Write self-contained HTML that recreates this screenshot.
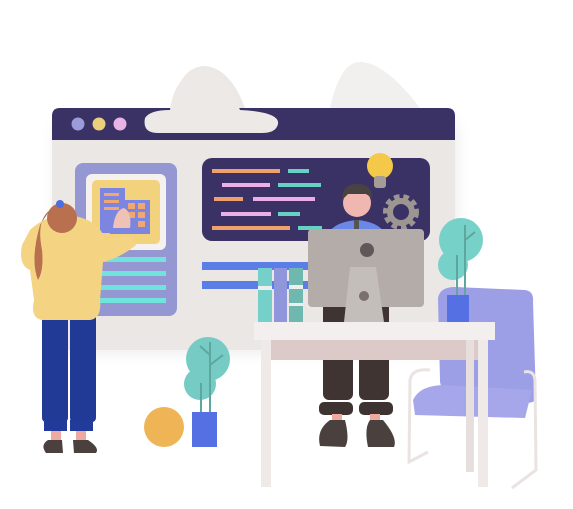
<!DOCTYPE html>
<html><head><meta charset="utf-8"><style>html,body{margin:0;padding:0;background:#fff;width:573px;height:509px;overflow:hidden}</style></head>
<body>
<svg width="573" height="509" viewBox="0 0 573 509" xmlns="http://www.w3.org/2000/svg">
<defs>
<filter id="sh" x="-20%" y="-20%" width="140%" height="150%"><feGaussianBlur stdDeviation="8"/></filter>
</defs>
<path d="M330 108 Q340 62 360 62 Q385 62 420 108 Z" fill="#f2f0ef"/>
<path d="M170 110 Q180 66 205 66 Q230 68 245 108 Z" fill="#ebe8e6"/>
<rect x="56" y="120" width="400" height="232" rx="10" fill="#000" opacity=".08" filter="url(#sh)"/>
<rect x="52" y="108" width="403" height="242" rx="8" fill="#ebe7e5"/>
<path d="M52 116 Q52 108 60 108 L447 108 Q455 108 455 116 L455 140 L52 140 Z" fill="#3a3264"/>
<circle cx="78" cy="124" r="6.5" fill="#9a9bd8"/>
<circle cx="99" cy="124" r="6.5" fill="#eccf7d"/>
<circle cx="120" cy="124" r="6.5" fill="#e9b3e6"/>
<path d="M158 133 Q142 133 145 118 Q150 110 170 110 Q175 72 205 70 Q225 70 240 110 Q280 112 278 124 Q276 133 262 133 Z" fill="#ece9e7"/>
<rect x="75" y="163" width="102" height="153" rx="8" fill="#9597d3"/>
<rect x="86" y="174" width="80" height="76" rx="6" fill="#f4f1ee"/>
<rect x="92" y="180" width="68" height="64" rx="5" fill="#f2d27c"/>
<rect x="100" y="188" width="25" height="45" fill="#7c86e0"/>
<rect x="110" y="200" width="40" height="34" fill="#7c86e0"/>
<g fill="#f0a870"><rect x="128" y="203" width="7" height="6"/><rect x="138" y="203" width="7" height="6"/><rect x="128" y="212" width="7" height="6"/><rect x="138" y="212" width="7" height="6"/><rect x="138" y="221" width="7" height="6"/><rect x="104" y="193" width="15" height="3"/><rect x="104" y="200" width="15" height="3"/><rect x="104" y="207" width="15" height="3"/></g>
<g fill="#6fe3dc"><rect x="90" y="257" width="76" height="5"/><rect x="90" y="271" width="76" height="5"/><rect x="90" y="285" width="76" height="5"/><rect x="90" y="298" width="76" height="5"/></g>
<rect x="202" y="158" width="228" height="83" rx="10" fill="#3a3264"/>
<g>
<rect x="212" y="169" width="68" height="4" fill="#f0a06c"/><rect x="288" y="169" width="21" height="4" fill="#67d1c4"/>
<rect x="222" y="183" width="48" height="4" fill="#ebaee8"/><rect x="278" y="183" width="43" height="4" fill="#67d1c4"/>
<rect x="214" y="197" width="29" height="4" fill="#f0a06c"/><rect x="253" y="197" width="62" height="4" fill="#ebaee8"/>
<rect x="221" y="212" width="50" height="4" fill="#ebaee8"/><rect x="278" y="212" width="22" height="4" fill="#67d1c4"/>
<rect x="212" y="226" width="78" height="4" fill="#f0a06c"/><rect x="298" y="226" width="24" height="4" fill="#67d1c4"/>
</g>
<rect x="202" y="262" width="130" height="8" fill="#5b7de6"/>
<rect x="202" y="281" width="130" height="8" fill="#5b7de6"/>
<circle cx="380" cy="166" r="13" fill="#f4c94a"/>
<rect x="374" y="176" width="12" height="12" rx="3" fill="#a59c98"/>
<circle cx="401" cy="212" r="14" fill="none" stroke="#9d9592" stroke-width="8" stroke-dasharray="5 3.5"/>
<circle cx="401" cy="212" r="11" fill="none" stroke="#9d9592" stroke-width="6"/>
<path d="M325 240 Q330 222 357 220 Q383 222 388 240 Z" fill="#6c88e6"/>
<circle cx="357" cy="203" r="14" fill="#f0b6b0"/>
<path d="M342 200 Q342 184 357 184 Q372 184 372 198 L366 194 L348 194 Z" fill="#4a4240"/>
<rect x="354" y="220" width="5" height="12" fill="#555"/>
<rect x="323" y="300" width="30" height="100" rx="6" fill="#3f3432"/>
<rect x="359" y="300" width="30" height="100" rx="6" fill="#3f3432"/>
<rect x="319" y="402" width="34" height="13" rx="5" fill="#3d3331"/>
<rect x="359" y="402" width="34" height="13" rx="5" fill="#3d3331"/>
<rect x="332" y="414" width="10" height="8" fill="#eeaaa0"/><rect x="370" y="414" width="10" height="8" fill="#eeaaa0"/>
<path d="M320 446 Q316 430 330 420 L345 420 Q350 440 345 447 Z" fill="#4a403e"/>
<path d="M368 447 Q364 428 370 420 L383 420 Q398 438 394 447 Z" fill="#4a403e"/>
<rect x="308" y="229" width="116" height="78" rx="4" fill="#b4aca8"/>
<circle cx="367" cy="250" r="7" fill="#5e5858"/>
<path d="M350 267 L376 267 L384 322 L344 322 Z" fill="#c4beba"/>
<circle cx="364" cy="296" r="5" fill="#7a706c"/>
<rect x="258" y="268" width="14" height="56" fill="#74d0c9"/>
<rect x="274" y="268" width="13" height="56" fill="#8f96dc"/>
<rect x="289" y="268" width="14" height="56" fill="#6fb8b0"/>
<rect x="258" y="286" width="14" height="4" fill="#eee"/><rect x="289" y="285" width="14" height="4" fill="#eee"/><rect x="289" y="303" width="14" height="3" fill="#eee"/>
<path d="M438 298 Q440 287 455 287 L525 290 Q534 291 533 302 L536 400 Q530 405 515 402 L450 395 Q440 390 440 380 Z" fill="#9c9ee6"/>
<path d="M413 400 Q420 385 445 385 L532 390 L525 418 L415 415 Z" fill="#a5a7ea"/>
<path d="M430 370 Q412 368 410 380 L409 462 L428 452" fill="none" stroke="#eae3e2" stroke-width="3"/>
<path d="M524 372 Q534 370 535 380 L536 470 L512 488" fill="none" stroke="#eae3e2" stroke-width="3"/>
<circle cx="461" cy="240" r="22" fill="#76d1c9"/>
<circle cx="453" cy="265" r="15" fill="#76d1c9"/>
<path d="M465 225 L465 295 M457 255 L457 295 M465 240 L475 232" stroke="#5fa69f" stroke-width="2" fill="none"/>
<rect x="447" y="295" width="22" height="28" fill="#5470e2"/>
<rect x="254" y="322" width="241" height="18" fill="#f3efee"/>
<rect x="270" y="340" width="210" height="20" fill="#dccac8"/>
<rect x="261" y="340" width="10" height="147" fill="#efe9e8"/>
<rect x="478" y="340" width="10" height="147" fill="#efe9e8"/>
<rect x="466" y="340" width="8" height="132" fill="#e6dfde"/>
<circle cx="208" cy="359" r="22" fill="#76cbc5"/>
<circle cx="200" cy="384" r="16" fill="#76cbc5"/>
<path d="M210 342 L210 428 M201 383 L201 428 M210 365 L223 355 M210 355 L200 346" stroke="#5fa69f" stroke-width="2" fill="none"/>
<rect x="192" y="412" width="25" height="35" fill="#5470e2"/>
<circle cx="164" cy="427" r="20" fill="#eeb456"/>
<rect x="42" y="310" width="26" height="112" rx="4" fill="#213a96"/>
<rect x="70" y="310" width="26" height="112" rx="4" fill="#213a96"/>
<rect x="44" y="420" width="23" height="11" fill="#223b9a"/>
<rect x="70" y="420" width="23" height="11" fill="#223b9a"/>
<rect x="51" y="431" width="10" height="10" fill="#eeaaa0"/><rect x="76" y="431" width="10" height="10" fill="#eeaaa0"/>
<path d="M46 453 Q40 445 48 440 L62 440 L63 453 Z" fill="#4a403e"/>
<path d="M74 453 L73 440 L88 440 Q100 448 96 453 Z" fill="#4a403e"/>
<path d="M30 230 Q45 215 70 215 Q100 220 105 240 L130 235 L136 245 Q120 258 103 262 L100 300 Q102 318 90 320 L42 320 Q30 318 34 300 L30 270 Q18 265 22 245 Z" fill="#f4d482"/>
<path d="M113 228 Q115 210 124 208 Q132 212 130 228 Z" fill="#f0c2b6"/>
<circle cx="62" cy="218" r="15" fill="#b8704f"/>
<path d="M50 210 Q36 220 42 250 Q44 270 38 280 Q30 260 40 225 Z" fill="#b8704f"/>
<circle cx="60" cy="204" r="4" fill="#4c6ee0"/>
</svg>
</body></html>
